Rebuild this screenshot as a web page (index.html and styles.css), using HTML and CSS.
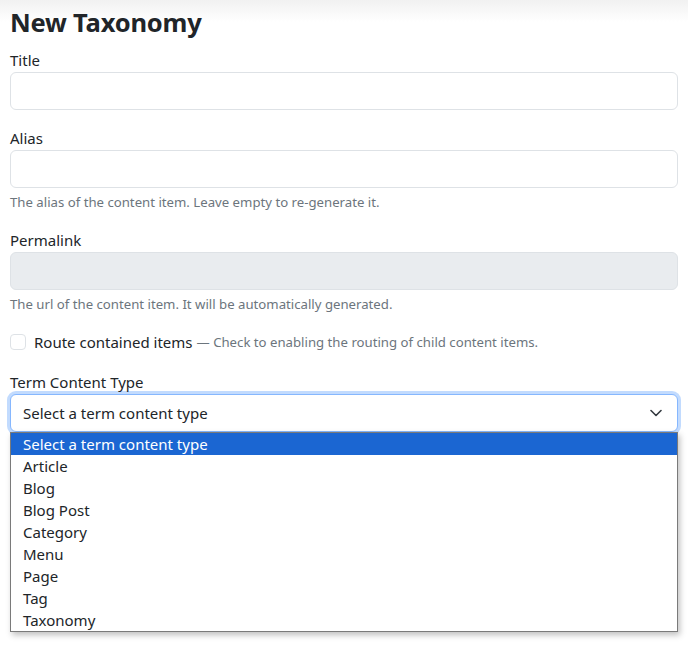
FILE: index.html
```html
<!DOCTYPE html>
<html lang="en">
<head>
<meta charset="utf-8">
<title>New Taxonomy</title>
<link rel="stylesheet" href="styles.css">
</head>
<body>
<div class="topshade"></div>
<main class="page">
  <h1 class="title">New Taxonomy</h1>

  <div class="field">
    <label class="label">Title</label>
    <input class="control" type="text">
  </div>

  <div class="field">
    <label class="label">Alias</label>
    <input class="control" type="text">
    <div class="hint">The alias of the content item. Leave empty to re-generate it.</div>
  </div>

  <div class="field">
    <label class="label">Permalink</label>
    <input class="control" type="text" disabled>
    <div class="hint">The url of the content item. It will be automatically generated.</div>
  </div>

  <div class="field check-row">
    <span class="checkbox"></span>
    <span class="check-label">Route contained items</span>
    <span class="hint inline">— Check to enabling the routing of child content items.</span>
  </div>

  <div class="field select-field">
    <label class="label">Term Content Type</label>
    <div class="select">
      <span>Select a term content type</span>
      <svg class="chev" width="12" height="8" viewBox="0 0 12 8"><path d="M1 1.5l5 5 5-5" fill="none" stroke="#343a40" stroke-width="1.6" stroke-linecap="round" stroke-linejoin="round"/></svg>
    </div>
    <ul class="menu">
      <li class="active">Select a term content type</li>
      <li>Article</li>
      <li>Blog</li>
      <li>Blog Post</li>
      <li>Category</li>
      <li>Menu</li>
      <li>Page</li>
      <li>Tag</li>
      <li>Taxonomy</li>
    </ul>
  </div>
</main>
</body>
</html>
```

FILE: styles.css
```css
* { box-sizing: border-box; }
html, body { margin: 0; padding: 0; background: #fff; }
body {
  font-family: "Segoe UI", "Noto Sans", sans-serif;
  color: #212529;
  font-size: 15px;
  line-height: 1.5;
  min-height: 647px;
}
.topshade {
  position: absolute;
  left: 0; right: 0; top: 0;
  height: 22px;
  background: linear-gradient(#f1f1f1, rgba(255,255,255,0));
  pointer-events: none;
}
.page {
  position: relative;
  padding: 0 10px;
}
.title {
  margin: 0;
  padding-top: 2px;
  height: 48px;
  font-size: 25.5px;
  font-weight: 700;
  line-height: 40px;
  letter-spacing: -0.2px;
  color: #212529;
}
.field { margin-bottom: 16px; }
.label { display: block; height: 24px; line-height: 24px; }
.control {
  display: block;
  width: 100%;
  height: 38px;
  border: 1px solid #dee2e6;
  border-radius: 6px;
  background: #fff;
  font: inherit;
  padding: 6px 12px;
}
.control:disabled { background: #e9ecef; }
.hint {
  margin-top: 4px;
  font-size: 13.2px;
  line-height: 20px;
  color: #6c757d;
}
.check-row {
  display: flex;
  align-items: center;
  height: 24px;
}
.checkbox {
  width: 16px; height: 16px;
  border: 1px solid #dee2e6;
  border-radius: 4px;
  margin-right: 8px;
}
.check-label { margin-right: 4px; }
.hint.inline { margin-top: 0; }
.select {
  display: flex;
  align-items: center;
  justify-content: space-between;
  height: 38px;
  padding: 0 12px;
  border: 1px solid #86b7fe;
  border-radius: 6px;
  box-shadow: 0 0 0 3px #c2dbfe;
  background: #fff;
}
.chev { margin-right: 3px; }
.menu {
  margin: 0;
  padding: 0;
  list-style: none;
  background: #fff;
  border: 1px solid #7a7a7a;
  box-shadow: 2px 3px 6px rgba(0,0,0,0.25);
}
.menu li {
  height: 22px;
  line-height: 22px;
  padding-left: 12px;
  color: #212529;
}
.menu li.active { background: #1b66d2; color: #fff; }
```
